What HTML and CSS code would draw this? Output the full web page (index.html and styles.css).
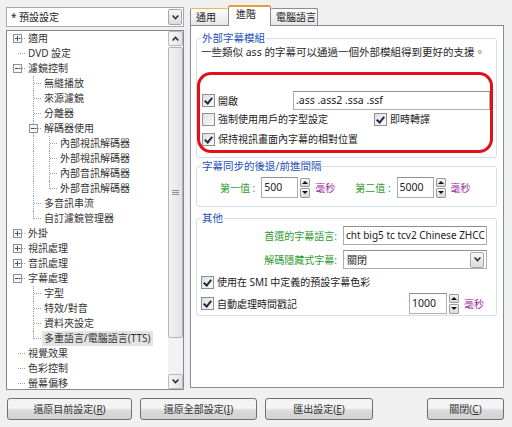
FILE: index.html
```html
<!DOCTYPE html>
<html>
<head lang="zh-Hant">
    <meta charset="UTF-8">
    <title>字幕處理 - 進階</title>
    <link rel="stylesheet" href="styles.css">
</head>
<body>
<div class="window">
    <div class="main">
        <div class="side">
            <div class="combo">
                <span class="combo-text">* 預設設定</span>
                <span class="drop-btn"><svg width="7" height="5" viewBox="0 0 7 5"><path d="M0.6 0.6L3.5 3.6L6.4 0.6" stroke="#2b2b2b" stroke-width="1.5" fill="none"/></svg></span>
            </div>
            <div class="tree">
                <div class="tree-items">
                    <div class="row"><span class="g h x"><svg width="9" height="9"><rect x="0.5" y="0.5" width="8" height="8" fill="#f6f6f6" stroke="#919191"/><path d="M2 4.5h5M4.5 2v5" stroke="#3c4e66"/></svg></span><span class="txt">適用</span></div>
                    <div class="row"><span class="g h"></span><span class="txt">DVD 設定</span></div>
                    <div class="row"><span class="g h x"><svg width="9" height="9"><rect x="0.5" y="0.5" width="8" height="8" fill="#f6f6f6" stroke="#919191"/><path d="M2 4.5h5" stroke="#3c4e66"/></svg></span><span class="txt">濾鏡控制</span></div>
                    <div class="row"><span class="g"></span><span class="g t"></span><span class="txt">無縫播放</span></div>
                    <div class="row"><span class="g"></span><span class="g t"></span><span class="txt">來源濾鏡</span></div>
                    <div class="row"><span class="g"></span><span class="g t"></span><span class="txt">分離器</span></div>
                    <div class="row"><span class="g"></span><span class="g t x"><svg width="9" height="9"><rect x="0.5" y="0.5" width="8" height="8" fill="#f6f6f6" stroke="#919191"/><path d="M2 4.5h5" stroke="#3c4e66"/></svg></span><span class="txt">解碼器使用</span></div>
                    <div class="row"><span class="g"></span><span class="g v"></span><span class="g t"></span><span class="txt">內部視訊解碼器</span></div>
                    <div class="row"><span class="g"></span><span class="g v"></span><span class="g t"></span><span class="txt">外部視訊解碼器</span></div>
                    <div class="row"><span class="g"></span><span class="g v"></span><span class="g t"></span><span class="txt">內部音訊解碼器</span></div>
                    <div class="row"><span class="g"></span><span class="g v"></span><span class="g l"></span><span class="txt">外部音訊解碼器</span></div>
                    <div class="row"><span class="g"></span><span class="g t"></span><span class="txt">多音訊串流</span></div>
                    <div class="row"><span class="g"></span><span class="g l"></span><span class="txt">自訂濾鏡管理器</span></div>
                    <div class="row"><span class="g h x"><svg width="9" height="9"><rect x="0.5" y="0.5" width="8" height="8" fill="#f6f6f6" stroke="#919191"/><path d="M2 4.5h5M4.5 2v5" stroke="#3c4e66"/></svg></span><span class="txt">外掛</span></div>
                    <div class="row"><span class="g h x"><svg width="9" height="9"><rect x="0.5" y="0.5" width="8" height="8" fill="#f6f6f6" stroke="#919191"/><path d="M2 4.5h5M4.5 2v5" stroke="#3c4e66"/></svg></span><span class="txt">視訊處理</span></div>
                    <div class="row"><span class="g h x"><svg width="9" height="9"><rect x="0.5" y="0.5" width="8" height="8" fill="#f6f6f6" stroke="#919191"/><path d="M2 4.5h5M4.5 2v5" stroke="#3c4e66"/></svg></span><span class="txt">音訊處理</span></div>
                    <div class="row"><span class="g h x"><svg width="9" height="9"><rect x="0.5" y="0.5" width="8" height="8" fill="#f6f6f6" stroke="#919191"/><path d="M2 4.5h5" stroke="#3c4e66"/></svg></span><span class="txt">字幕處理</span></div>
                    <div class="row"><span class="g"></span><span class="g t"></span><span class="txt">字型</span></div>
                    <div class="row"><span class="g"></span><span class="g t"></span><span class="txt">特效/對音</span></div>
                    <div class="row"><span class="g"></span><span class="g t"></span><span class="txt">資料夾設定</span></div>
                    <div class="row"><span class="g"></span><span class="g l"></span><span class="txt selected">多重語言/電腦語言(TTS)</span></div>
                    <div class="row"><span class="g h"></span><span class="txt">視覺效果</span></div>
                    <div class="row"><span class="g h"></span><span class="txt">色彩控制</span></div>
                    <div class="row"><span class="g h"></span><span class="txt">螢幕偏移</span></div>
                </div>
                <div class="vscroll">
                    <div class="sb-btn"><svg width="7" height="5" viewBox="0 0 7 5"><path d="M0.6 4.4L3.5 1.4L6.4 4.4" stroke="#2b2b2b" stroke-width="1.5" fill="none"/></svg></div>
                    <div class="sb-thumb"><svg width="7" height="7" viewBox="0 0 7 7"><path d="M0 1.5h7M0 3.5h7M0 5.5h7" stroke="#8a8f99"/></svg></div>
                    <div class="sb-track"></div>
                    <div class="sb-btn"><svg width="7" height="5" viewBox="0 0 7 5"><path d="M0.6 0.6L3.5 3.6L6.4 0.6" stroke="#2b2b2b" stroke-width="1.5" fill="none"/></svg></div>
                </div>
            </div>
        </div>

        <div class="content">
            <div class="tabs">
                <span class="tab tab-hot">通用</span>
                <span class="tab tab-on">進階</span>
                <span class="tab tab-last">電腦語言</span>
            </div>
            <div class="panel">
                <fieldset class="group g-ext">
                    <legend>外部字幕模組</legend>
                    <p class="desc">一些類似 ass 的字幕可以通過一個外部模組得到更好的支援。</p>
                    <div class="mark">
                        <div class="opt-row">
                            <span class="opt"><span class="cb on"></span>開啟</span>
                            <span class="field ext-field">.ass .ass2 .ssa .ssf</span>
                        </div>
                        <div class="opt-row">
                            <span class="opt opt-wide"><span class="cb"></span>強制使用用戶的字型設定</span>
                            <span class="opt"><span class="cb on"></span>即時轉譯</span>
                        </div>
                        <div class="opt-row">
                            <span class="opt"><span class="cb on"></span>保持視訊畫面內字幕的相對位置</span>
                        </div>
                    </div>
                </fieldset>

                <fieldset class="group g-sync">
                    <legend>字幕同步的後退/前進間隔</legend>
                    <div class="sync-row">
                        <span class="lbl">第一值 :</span>
                        <span class="field num">500</span>
                        <span class="spin"><span class="spin-up"></span><span class="spin-down"></span></span>
                        <span class="unit">毫秒</span>
                        <span class="lbl lbl-2">第二值 :</span>
                        <span class="field num">5000</span>
                        <span class="spin"><span class="spin-up"></span><span class="spin-down"></span></span>
                        <span class="unit">毫秒</span>
                    </div>
                </fieldset>

                <fieldset class="group g-other">
                    <legend>其他</legend>
                    <div class="form-grid">
                        <span class="lbl">首選的字幕語言:</span>
                        <span class="field lang-field">cht big5 tc tcv2 Chinese ZHCC</span>
                        <span class="lbl">解碼隱藏式字幕:</span>
                        <span class="field select-field"><span>關閉</span><span class="drop-btn"><svg width="7" height="5" viewBox="0 0 7 5"><path d="M0.6 0.6L3.5 3.6L6.4 0.6" stroke="#2b2b2b" stroke-width="1.5" fill="none"/></svg></span></span>
                    </div>
                    <div class="opt-row smi-row">
                        <span class="opt"><span class="cb on"></span>使用在 SMI 中定義的預設字幕色彩</span>
                    </div>
                    <div class="opt-row stamp-row">
                        <span class="opt stamp-opt"><span class="cb on"></span>自動處理時間戳記</span>
                        <span class="field num num-stamp">1000</span>
                        <span class="spin"><span class="spin-up"></span><span class="spin-down"></span></span>
                        <span class="unit">毫秒</span>
                    </div>
                </fieldset>
            </div>
        </div>
    </div>

    <div class="footer">
        <button class="btn btn-1">還原目前設定(<u>R</u>)</button>
        <button class="btn btn-2">還原全部設定(<u>I</u>)</button>
        <button class="btn btn-3">匯出設定(<u>E</u>)</button>
        <button class="btn btn-4">關閉(<u>C</u>)</button>
    </div>
</div>
</body>
</html>
```

FILE: styles.css
```css
body{
    margin: 0;
    padding: 0;
    background-color: #f0f0f0;
    font-family: "Noto Sans", "Noto Sans CJK TC", sans-serif;
    font-size: 10px;
    color: #222;
}
.window{
    width: 512px;
    height: 427px;
    overflow: hidden;
}
.main{
    display: flex;
    gap: 6px;
    padding: 5px 0 0 6px;
    height: 385px;
}

/* left column */
.side{
    width: 178px;
    display: flex;
    flex-direction: column;
    gap: 3px;
    padding-top: 2px;
}
.combo{
    height: 20px;
    box-sizing: border-box;
    border: 1px #a4a9b1 solid;
    background-color: #fff;
    display: flex;
    align-items: center;
    padding-left: 4px;
}
.combo-text{
    flex: 1;
    line-height: 16px;
}
.drop-btn{
    width: 14px;
    height: 16px;
    margin-right: 1px;
    box-sizing: border-box;
    border: 1px #a7a7a7 solid;
    border-radius: 2px;
    background: linear-gradient(#f7f7f7, #dcdcdc);
    display: flex;
    align-items: center;
    justify-content: center;
}
.tree{
    height: 360px;
    box-sizing: border-box;
    border: 1px #828790 solid;
    background-color: #fff;
    display: flex;
}
.tree-items{
    flex: 1;
    padding-left: 3px;
}
.row{
    display: flex;
    height: 15px;
    line-height: 15px;
}
.g{
    width: 16px;
    height: 15px;
    flex: none;
    position: relative;
}
.g.v::before,
.g.t::before,
.g.l::before{
    content: "";
    position: absolute;
    left: 7px;
    top: 0;
    bottom: 0;
    border-left: 1px dotted #a0a0a0;
}
.g.l::before{
    bottom: auto;
    height: 8px;
}
.g.t::after,
.g.l::after,
.g.h::after{
    content: "";
    position: absolute;
    left: 8px;
    top: 7px;
    width: 7px;
    border-top: 1px dotted #a0a0a0;
}
.g.x svg{
    position: relative;
    display: block;
    margin: 3px 0 0 3px;
}
.txt{
    padding: 0 2px;
    white-space: nowrap;
    color: #333;
}
.txt.selected{
    background-color: #e3e3e3;
}
.vscroll{
    width: 15px;
    display: flex;
    flex-direction: column;
    background-color: #f2f2f2;
}
.sb-btn{
    height: 15px;
    box-sizing: border-box;
    border: 1px #b9b9b9 solid;
    border-radius: 2px;
    background: linear-gradient(to right, #f6f6f6, #e3e3e3);
    display: flex;
    align-items: center;
    justify-content: center;
}
.sb-thumb{
    height: 291px;
    margin-top: 1px;
    box-sizing: border-box;
    border: 1px #b3b3b3 solid;
    border-radius: 2px;
    background: linear-gradient(to right, #f4f4f4, #e2e2e2);
    display: flex;
    align-items: center;
    justify-content: center;
}
.sb-track{
    flex: 1;
}

/* right column */
.content{
    width: 314px;
}
.tabs{
    height: 20px;
    display: flex;
    align-items: flex-end;
    position: relative;
    z-index: 1;
}
.tab{
    height: 17px;
    box-sizing: border-box;
    border: 1px #898c95 solid;
    border-bottom: none;
    border-radius: 2px 2px 0 0;
    background: linear-gradient(#fdfdfd, #e6e6e6);
    padding: 0 5px;
    line-height: 16px;
    white-space: nowrap;
}
.tab-hot{
    width: 38px;
    border-top: 1px #e8b85a solid;
    border-right: none;
}
.tab-on{
    width: 43px;
    height: 21px;
    margin-bottom: -1px;
    background: #fff;
    border-top: 2px #e59d3a solid;
    padding-left: 7px;
    line-height: 14px;
}
.tab-last{
    border-left: none;
    width: 47px;
}
.panel{
    height: 363px;
    box-sizing: border-box;
    border: 1px #898c95 solid;
    background-color: #fff;
    padding: 5px 6px 0 5px;
}
.group{
    margin: 0;
    padding: 0 4px;
    border: 1px #d5dfe5 solid;
    border-radius: 3px;
}
.group legend{
    padding: 0 1px;
    color: #1d50b8;
    line-height: 14px;
    font-size: 10.5px;
}
.desc{
    margin: 0;
    line-height: 14px;
    font-size: 10.5px;
    color: #2a2a2a;
    white-space: nowrap;
}
.mark{
    margin: 13px -1px 4px -4px;
    height: 81px;
    box-sizing: border-box;
    border: 3px #e3101a solid;
    border-radius: 14px;
    padding: 16px 0 0 2px;
}
.opt-row{
    display: flex;
    align-items: center;
}
.mark .opt-row{
    height: 16px;
    margin-bottom: 4px;
}
.mark .opt-row:first-child{
    height: 19px;
    margin-bottom: 1px;
}
.opt{
    display: flex;
    align-items: center;
    line-height: 14px;
    white-space: nowrap;
}
.opt-wide{
    width: 172px;
}
.cb{
    width: 13px;
    height: 13px;
    box-sizing: border-box;
    border: 1px #8e8f8f solid;
    background: linear-gradient(135deg, #e0e0e0, #fafafa);
    margin-right: 3px;
    flex: none;
    position: relative;
}
.cb.on::after{
    content: "";
    position: absolute;
    left: 3px;
    top: 1px;
    width: 3px;
    height: 6px;
    border: solid #1f2b45;
    border-width: 0 2px 2px 0;
    transform: rotate(40deg);
}
.field{
    box-sizing: border-box;
    border: 1px #abadb3 solid;
    border-top-color: #8b8f98;
    background-color: #fff;
    padding: 0 3px;
    white-space: nowrap;
    overflow: hidden;
}
.ext-field{
    width: 197px;
    height: 19px;
    line-height: 17px;
    margin-left: auto;
    padding-left: 2px;
    font-size: 10.5px;
}

.g-sync{
    margin-top: 1px;
    padding-bottom: 8px;
}
.sync-row{
    display: flex;
    align-items: center;
    padding: 4px 0 0 19px;
}
.lbl{
    color: #2f9a2f;
    white-space: nowrap;
}
.sync-row .lbl{
    margin-right: 6px;
}
.lbl-2{
    margin-left: 20px;
}
.num{
    width: 37px;
    height: 21px;
    line-height: 19px;
    padding-left: 2px;
    font-size: 10.5px;
}
.spin{
    width: 10px;
    height: 20px;
    margin-left: 2px;
    display: flex;
    flex-direction: column;
    gap: 1px;
}
.spin-up,
.spin-down{
    flex: 1;
    box-sizing: border-box;
    border: 1px #9c9c9c solid;
    border-radius: 1px;
    background: linear-gradient(#f6f6f6, #d9d9d9);
    position: relative;
}
.spin-up::after,
.spin-down::after{
    content: "";
    position: absolute;
    left: 1px;
    top: 2px;
    border-left: 3px transparent solid;
    border-right: 3px transparent solid;
}
.spin-up::after{
    border-bottom: 3px #111 solid;
}
.spin-down::after{
    border-top: 3px #111 solid;
}
.unit{
    margin-left: 5px;
    color: #9b2a9c;
}

.g-other{
    margin-top: 4px;
    padding-bottom: 1px;
}
.form-grid{
    display: grid;
    grid-template-columns: 136px 144px;
    column-gap: 6px;
    row-gap: 5px;
    align-items: center;
    padding-top: 1px;
}
.form-grid .lbl{
    text-align: right;
}
.lang-field{
    height: 19px;
    line-height: 17px;
    font-size: 10px;
    padding-left: 2px;
}
.select-field{
    height: 19px;
    display: flex;
    align-items: center;
    padding-right: 1px;
}
.select-field span:first-child{
    flex: 1;
}
.smi-row{
    height: 14px;
    margin-top: 6px;
}
.stamp-row{
    margin-top: 4px;
    height: 21px;
}
.stamp-opt{
    width: 208px;
}
.num-stamp{
    width: 38px;
}

/* bottom buttons */
.footer{
    display: flex;
    gap: 8px;
    padding: 8px 8px 0 7px;
}
.btn{
    height: 22px;
    box-sizing: border-box;
    border: 1px #707070 solid;
    border-radius: 3px;
    background: linear-gradient(#f4f4f4 45%, #dcdcdc 55%, #d2d2d2);
    font-family: "Noto Sans", "Noto Sans CJK TC", sans-serif;
    font-size: 10px;
    color: #333;
    padding: 0;
    line-height: 18px;
}
.btn-1{ width: 125px; }
.btn-2{ width: 117px; }
.btn-3{ width: 108px; }
.btn-4{
    width: 77px;
    margin-left: auto;
}
```
